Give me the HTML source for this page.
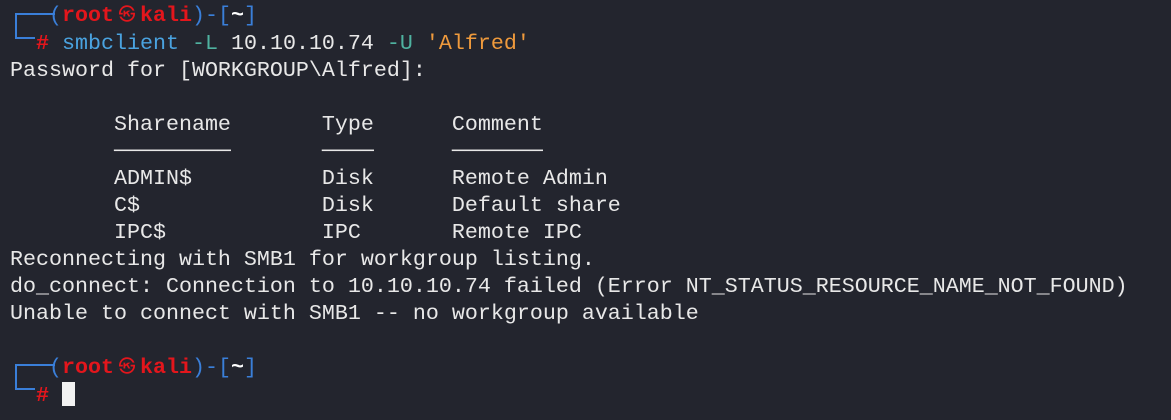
<!DOCTYPE html>
<html><head><meta charset="utf-8"><style>
html,body{margin:0;padding:0;background:#23252e;width:1171px;height:420px;overflow:hidden;position:relative}
pre{margin:0;position:absolute;left:10px;top:2px;font-family:"Liberation Mono","DejaVu Sans Mono",monospace;font-size:21.67px;line-height:27px;color:#e8e8e8;letter-spacing:0}
.b{color:#3a7fd9}.r{color:#e3161c;font-weight:bold}.c{color:#4aa3e0}.t{color:#4fb2a0}.o{color:#ef9a3c}
.sym{display:inline-block;width:26px;text-align:center;font-size:17px;font-weight:normal;vertical-align:1px}
.cur{display:inline-block;width:13px;height:24px;background:#f2f2f2;vertical-align:-5px}
.ln{position:absolute;background:#3a7fd9}
</style></head><body>
<div class="ln" style="left:15px;top:13px;width:2px;height:25px"></div>
<div class="ln" style="left:15px;top:13px;width:40px;height:2px"></div>
<div class="ln" style="left:15px;top:37px;width:20px;height:2px"></div>
<div class="ln" style="left:15px;top:364px;width:2px;height:25px"></div>
<div class="ln" style="left:15px;top:364px;width:40px;height:2px"></div>
<div class="ln" style="left:15px;top:388px;width:20px;height:2px"></div>
<pre>   <span class="b">(</span><span class="r">root<span class="sym">㉿</span>kali</span><span class="b">)-[</span><span style="color:#fff;font-weight:bold">~</span><span class="b">]</span>
  <span class="r">#</span> <span class="c">smbclient</span> <span class="t">-L</span> 10.10.10.74 <span class="t">-U</span> <span class="o">'Alfred'</span>
Password for [WORKGROUP\Alfred]:

        Sharename       Type      Comment
        ─────────       ────      ───────
        ADMIN$          Disk      Remote Admin
        C$              Disk      Default share
        IPC$            IPC       Remote IPC
Reconnecting with SMB1 for workgroup listing.
do_connect: Connection to 10.10.10.74 failed (Error NT_STATUS_RESOURCE_NAME_NOT_FOUND)
Unable to connect with SMB1 -- no workgroup available

   <span class="b">(</span><span class="r">root<span class="sym">㉿</span>kali</span><span class="b">)-[</span><span style="color:#fff;font-weight:bold">~</span><span class="b">]</span>
  <span class="r">#</span> <span class="cur"></span></pre>
</body></html>
